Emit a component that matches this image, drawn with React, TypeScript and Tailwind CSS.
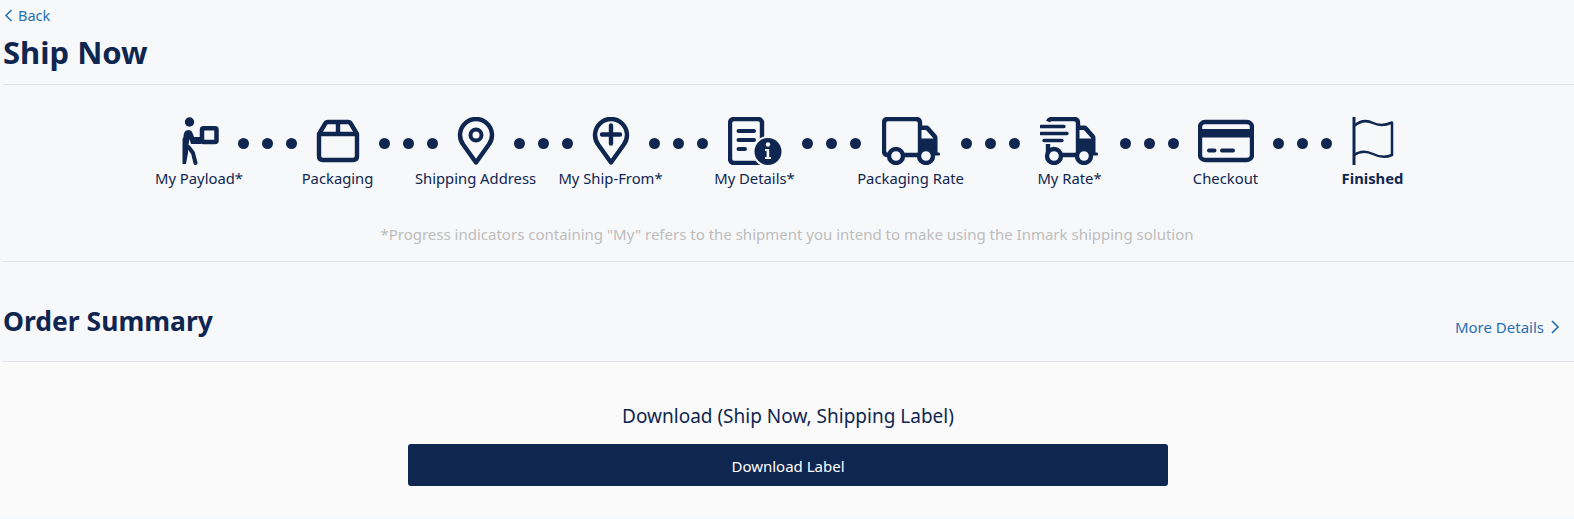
import { ReactNode } from "react";

const NAVY = "#0f2650";
const BG = "#f7f8fa";

function PersonIcon() {
  return (
    <svg width="48" height="48" viewBox="0 0 48 48" fill="none">
      <circle cx="14.5" cy="5" r="4.7" fill={NAVY} />
      <rect x="27" y="11.2" width="14.5" height="13.8" rx="1.5" stroke={NAVY} strokeWidth="4.5" />
      <path d="M8.5 20 Q8.5 13 13.5 13 Q16.5 13 17.5 16 L19 20 H26 V27 H16 L14.5 22 L13 31 V36 L11 47 H7.5 V22 Z" fill={NAVY} />
      <path d="M13.5 30 L18 36 L20.5 46" stroke={NAVY} strokeWidth="4" strokeLinecap="round" strokeLinejoin="round" />
    </svg>
  );
}

function BoxIcon() {
  return (
    <svg width="48" height="48" viewBox="0 0 48 48" fill="none" stroke={NAVY} strokeWidth="4.4" strokeLinejoin="round">
      <path d="M5 17 L11 7 Q12 5 14 5 H34 Q36 5 37 7 L43 17 V39 Q43 43 39 43 H9 Q5 43 5 39 Z" />
      <path d="M5 17 H43 M24 5 V17" />
    </svg>
  );
}

function PinOutline() {
  return <path d="M24 45.5 L11.5 28 A16 16 0 1 1 36.5 28 Z" />;
}

function PinIcon() {
  return (
    <svg width="48" height="48" viewBox="0 0 48 48" fill="none" stroke={NAVY} strokeWidth="4.4" strokeLinejoin="round">
      <PinOutline />
      <circle cx="24" cy="18" r="5.5" strokeWidth="4" />
    </svg>
  );
}

function PinPlusIcon() {
  return (
    <svg width="48" height="48" viewBox="0 0 48 48" fill="none" stroke={NAVY} strokeWidth="4.4" strokeLinejoin="round">
      <PinOutline />
      <path d="M15 17.5 H33 M24 8.5 V26.5" strokeLinecap="round" />
    </svg>
  );
}

function DetailsIcon() {
  return (
    <svg width="54" height="48" viewBox="0 0 54 48" fill="none">
      <rect x="2" y="2" width="32" height="44" rx="4" stroke={NAVY} strokeWidth="4.4" />
      <path d="M10.5 14 H26 M10.5 23 H26 M10.5 32 H17" stroke={NAVY} strokeWidth="4" strokeLinecap="round" />
      <circle cx="40" cy="34.5" r="15.5" fill={BG} />
      <circle cx="40" cy="34.5" r="13.5" fill={NAVY} />
      <circle cx="40" cy="27.5" r="2.2" fill={BG} />
      <path d="M37 32 H41.2 V40 H43 V42 H37 V40 H38.6 V34 H37 Z" fill={BG} />
    </svg>
  );
}

function Wheels() {
  return (
    <g fill={BG} stroke={NAVY} strokeWidth="4.4">
      <circle cx="14" cy="39" r="7" />
      <circle cx="44" cy="39" r="7" />
    </g>
  );
}

function Cab() {
  return (
    <>
      <path
        d="M38 8.5 H44.5 Q46 8.5 47 9.5 L54.5 18 Q55.5 19 55.5 21 V35.5 H57 Q58 35.5 58 37 Q58 38.5 57 38.5 H36 V8.5 Z"
        fill={NAVY}
      />
      <path d="M39.5 13 H44 L51.5 21.5 H39.5 Z" fill={BG} />
    </>
  );
}

function TruckIcon() {
  return (
    <svg width="58" height="48" viewBox="0 0 58 48" fill="none">
      <path d="M6 38 Q2 38 2 34 V6 Q2 2 6 2 H34 Q38 2 38 6 V38 H22" stroke={NAVY} strokeWidth="4.4" />
      <Cab />
      <Wheels />
    </svg>
  );
}

function FastTruckIcon() {
  return (
    <svg width="60" height="48" viewBox="0 0 60 48" fill="none">
      <path d="M8 4.5 Q9 2 12 2 H34 Q38 2 38 6 V38 H22 M8 27 V35 Q8 38 10 38" stroke={NAVY} strokeWidth="4.4" />
      <Cab />
      <path d="M1 9.5 H24 M1 16.5 H27 M4 23.5 H22" stroke={NAVY} strokeWidth="3.4" strokeLinecap="round" />
      <Wheels />
    </svg>
  );
}

function CardIcon() {
  return (
    <svg width="56" height="48" viewBox="0 0 56 48" fill="none">
      <rect x="2" y="5" width="52" height="38" rx="5" stroke={NAVY} strokeWidth="4.4" />
      <rect x="3" y="12" width="50" height="8.5" fill={NAVY} />
      <path d="M11 33.5 H16.5 M24 33.5 H35" stroke={NAVY} strokeWidth="4" strokeLinecap="round" />
    </svg>
  );
}

function FlagIcon() {
  return (
    <svg width="44" height="48" viewBox="0 0 44 48" fill="none" stroke={NAVY} strokeLinejoin="round">
      <path d="M3 0 V48" strokeWidth="3" />
      <path d="M3 9 C10 3 16 3 22 6 S34 8.5 41 5.5 V38 C34 41 28 40 22 37 S10 33 3 38" strokeWidth="2.5" />
    </svg>
  );
}

type Step = { label: string; icon: ReactNode; width: string; bold?: boolean };

const steps: Step[] = [
  { label: "My Payload*", icon: <PersonIcon />, width: "w-[77px]" },
  { label: "Packaging", icon: <BoxIcon />, width: "w-[82px]" },
  { label: "Shipping Address", icon: <PinIcon />, width: "w-[76px]" },
  { label: "My Ship-From*", icon: <PinPlusIcon />, width: "w-[76px]" },
  { label: "My Details*", icon: <DetailsIcon />, width: "w-[94px]" },
  { label: "Packaging Rate", icon: <TruckIcon />, width: "w-[100px]" },
  { label: "My Rate*", icon: <FastTruckIcon />, width: "w-[100px]" },
  { label: "Checkout", icon: <CardIcon />, width: "w-[94px]" },
  { label: "Finished", icon: <FlagIcon />, width: "w-[82px]", bold: true },
];

function Dots() {
  return (
    <div className="flex w-[59px] h-[48px] items-center justify-between pt-[4px]">
      <span className="w-[11px] h-[11px] rounded-full bg-[#0f2650]" />
      <span className="w-[11px] h-[11px] rounded-full bg-[#0f2650]" />
      <span className="w-[11px] h-[11px] rounded-full bg-[#0f2650]" />
    </div>
  );
}

export default function App() {
  return (
    <div className="min-h-[519px] bg-[#f7f8fa] text-[#0f2650] font-['Noto_Sans','Open_Sans',sans-serif]">
      <div className="pl-[3px]">
        <a className="flex h-[31px] items-center gap-[5px] pl-[1px] text-[14.5px] text-[#1f6fb2]">
          <svg width="9" height="13" viewBox="0 0 9 13" fill="none" stroke="#1f6fb2" strokeWidth="1.5">
            <path d="M7.5 1 L2 6.5 L7.5 12" />
          </svg>
          Back
        </a>
        <h1 className="h-[44px] text-[31px] font-bold leading-[42px]">Ship Now</h1>
        <div className="mt-[9px] h-px bg-[#dfe1e4]" />
      </div>

      <div className="flex justify-center pt-[32px]">
        {steps.map((step, i) => (
          <div key={step.label} className="flex">
            <div className={`flex flex-col items-center ${step.width}`}>
              <div className="flex h-[48px] items-center justify-center">{step.icon}</div>
              <span className={`whitespace-nowrap text-[14.8px] leading-[26px] ${step.bold ? "font-bold" : ""}`}>
                {step.label}
              </span>
            </div>
            {i < steps.length - 1 && <Dots />}
          </div>
        ))}
      </div>

      <p className="mt-[31px] text-center text-[15px] leading-[24px] text-[#bdbdbd]">
        *Progress indicators containing "My" refers to the shipment you intend to make using the Inmark shipping solution
      </p>

      <div className="pl-[3px]">
        <div className="mt-[15px] h-px bg-[#dfe1e4]" />
        <div className="flex h-[99px] justify-between pr-[14px]">
          <h2 className="pt-[39px] text-[26.5px] font-bold leading-[40px]">Order Summary</h2>
          <a className="flex items-center gap-[6px] pt-[31px] text-[15px] text-[#1f6fb2]">
            More Details
            <svg width="10" height="14" viewBox="0 0 10 14" fill="none" stroke="#1f6fb2" strokeWidth="1.6">
              <path d="M2 1 L8 7 L2 13" />
            </svg>
          </a>
        </div>
        <div className="h-px bg-[#dfe1e4]" />
      </div>

      <div className="flex flex-col items-center bg-[#fafafa] pl-[2px] pt-[40px] pb-[30px]">
        <p className="text-[19px] leading-[28px]">Download (Ship Now, Shipping Label)</p>
        <button className="mt-[14px] h-[42px] w-[760px] rounded-[3px] bg-[#0f2650] pt-[3px] text-[15px] text-white">
          Download Label
        </button>
      </div>
    </div>
  );
}
